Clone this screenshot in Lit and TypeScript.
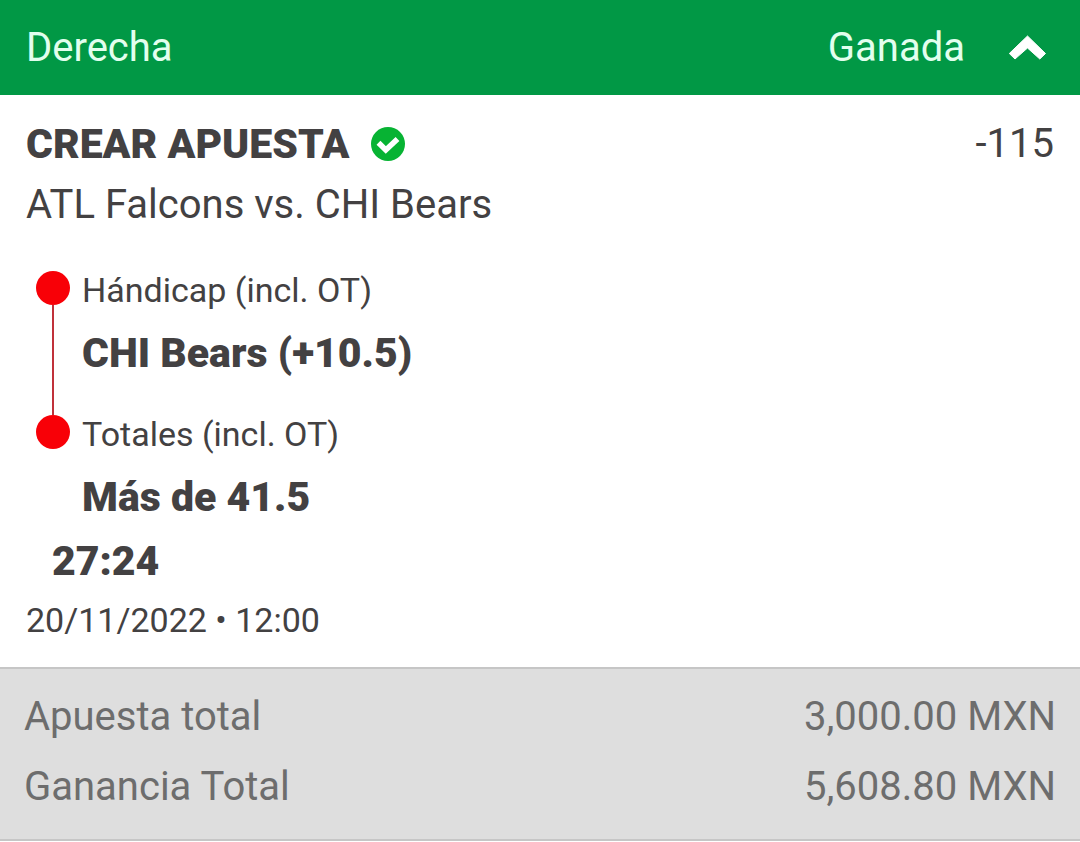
import { LitElement, html, css } from "lit";
import { customElement, property, state } from "lit/decorators.js";

interface Leg {
  market: string;
  pick: string;
}

@customElement("bet-leg")
class BetLeg extends LitElement {
  @property() market = "";
  @property() pick = "";
  @property({ type: Boolean }) first = false;
  @property({ type: Boolean }) last = false;

  static styles = css`
    :host {
      display: flex;
      gap: 12px;
    }
    .rail {
      display: flex;
      flex-direction: column;
      align-items: center;
      width: 34px;
      flex: none;
    }
    .lead {
      width: 2px;
      height: 12px;
    }
    .dot {
      width: 34px;
      height: 34px;
      border-radius: 50%;
      background: #f80007;
      flex: none;
    }
    .tail {
      width: 2px;
      flex: 1;
    }
    .line {
      background: #c0313a;
    }
    .text {
      padding-bottom: 18px;
    }
    .text.end {
      padding-bottom: 0;
    }
    .market {
      font-size: 34px;
      line-height: 62px;
    }
    .pick {
      font-size: 41px;
      line-height: 64px;
      font-weight: 900;
    }
  `;

  render() {
    return html`
      <div class="rail">
        <div class="lead ${this.first ? "" : "line"}"></div>
        <div class="dot"></div>
        <div class="tail ${this.last ? "" : "line"}"></div>
      </div>
      <div class="text ${this.last ? "end" : ""}">
        <div class="market">${this.market}</div>
        <div class="pick">${this.pick}</div>
      </div>
    `;
  }
}

@customElement("app-root")
class AppRoot extends LitElement {
  @state() open = true;

  legs: Leg[] = [
    { market: "Hándicap (incl. OT)", pick: "CHI Bears (+10.5)" },
    { market: "Totales (incl. OT)", pick: "Más de 41.5" },
  ];

  static styles = css`
    :host {
      display: block;
      background: #fff;
      color: #434142;
      font-family: Roboto, "Liberation Sans", sans-serif;
      font-size: 40px;
    }
    .head {
      display: flex;
      align-items: center;
      width: 100%;
      box-sizing: border-box;
      margin: 0;
      border: 0;
      padding: 18px 34px 17px 26px;
      background: #019845;
      color: #e2ffee;
      font: inherit;
      line-height: 60px;
      text-align: left;
      cursor: pointer;
    }
    .kind {
      flex: 1;
    }
    .chevron {
      width: 38px;
      height: 26px;
      margin-left: 43px;
    }
    .closed .chevron {
      transform: rotate(180deg);
    }
    .body {
      padding: 19px 26px 20px;
    }
    .row {
      display: flex;
      align-items: center;
      line-height: 60px;
    }
    .title {
      margin: 0;
      font-size: 41px;
      font-weight: 900;
    }
    .check {
      width: 34px;
      height: 34px;
      margin-left: 22px;
    }
    .odds {
      margin-left: auto;
    }
    .match {
      line-height: 62px;
    }
    .legs {
      margin: 23px 0 0;
      padding: 0 0 0 10px;
      list-style: none;
    }
    .score {
      padding-left: 26px;
      font-size: 41px;
      line-height: 64px;
      font-weight: 900;
    }
    .date {
      font-size: 34px;
      line-height: 54px;
    }
    .totals {
      margin: 0;
      padding: 13px 24px 17px;
      border-top: 2px solid #c6c6c6;
      border-bottom: 2px solid #c6c6c6;
      background: #dedede;
      color: #6d6d6d;
    }
    .total {
      display: flex;
      justify-content: space-between;
      line-height: 70px;
    }
    .total dd {
      margin: 0;
    }
  `;

  render() {
    return html`
      <article class=${this.open ? "opened" : "closed"}>
        <button
          class="head"
          aria-expanded=${this.open ? "true" : "false"}
          @click=${() => (this.open = !this.open)}
        >
          <span class="kind">Derecha</span>
          <span>Ganada</span>
          <svg class="chevron" viewBox="0 0 38 26" aria-hidden="true">
            <path
              d="M19.500 1 L37.500 18.500 L31.800 24 L19.500 13 L7 24 L1.300 18.500 Z"
              fill="#fff"
              stroke="#fff"
              stroke-width="1"
              stroke-linejoin="round"
            />
          </svg>
        </button>
        ${this.open
          ? html`
              <div class="body">
                <div class="row">
                  <h2 class="title">CREAR APUESTA</h2>
                  <svg class="check" viewBox="0 0 34 34" aria-hidden="true">
                    <circle cx="17" cy="17" r="17" fill="#07b333" />
                    <path
                      d="M7.500 15.800 L14.800 23 L26.500 12"
                      fill="none"
                      stroke="#fff"
                      stroke-width="5.500"
                    />
                  </svg>
                  <span class="odds">-115</span>
                </div>
                <div class="match">ATL Falcons vs. CHI Bears</div>
                <ul class="legs">
                  ${this.legs.map(
                    (leg, i) => html`
                      <li>
                        <bet-leg
                          .market=${leg.market}
                          .pick=${leg.pick}
                          .first=${i === 0}
                          .last=${i === this.legs.length - 1}
                        ></bet-leg>
                      </li>
                    `
                  )}
                </ul>
                <div class="score">27:24</div>
                <div class="date">20/11/2022 • 12:00</div>
              </div>
            `
          : null}
        <dl class="totals">
          <div class="total">
            <dt>Apuesta total</dt>
            <dd>3,000.00 MXN</dd>
          </div>
          <div class="total">
            <dt>Ganancia Total</dt>
            <dd>5,608.80 MXN</dd>
          </div>
        </dl>
      </article>
    `;
  }
}
